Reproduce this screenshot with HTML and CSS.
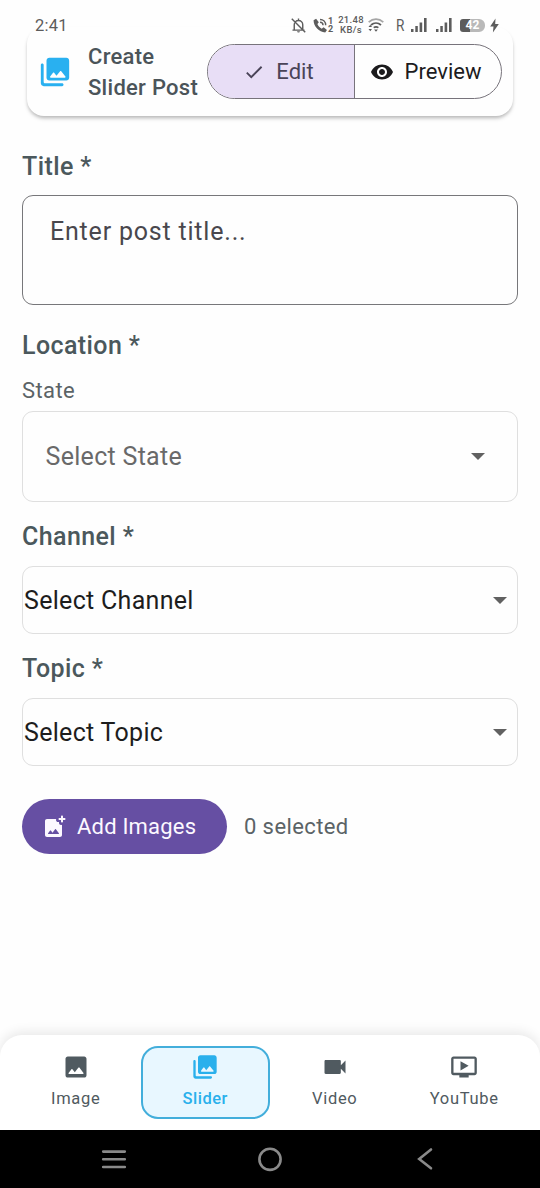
FILE: index.html
```html
<!DOCTYPE html>
<html lang="en">
<head>
<meta charset="utf-8">
<title>Create Slider Post</title>
<link rel="stylesheet" href="styles.css">
</head>
<body>
<svg class="defs" width="0" height="0">
  <symbol id="photos" viewBox="0 0 24 24"><path d="M22 16V4c0-1.1-.9-2-2-2H8c-1.1 0-2 .9-2 2v12c0 1.1.9 2 2 2h12c1.1 0 2-.9 2-2zm-10.6-3.47l1.63 2.18 2.58-3.22c.2-.25.58-.25.78 0l2.96 3.7c.26.33.03.81-.39.81H9c-.41 0-.65-.47-.4-.8l2-2.67c.2-.26.6-.26.8 0zM2 7v13c0 1.1.9 2 2 2h13c.55 0 1-.45 1-1s-.45-1-1-1H5c-.55 0-1-.45-1-1V7c0-.55-.45-1-1-1s-1 .45-1 1z"/></symbol>
  <symbol id="caret" viewBox="0 0 14 7"><path d="M0 0h14L7 7z"/></symbol>
</svg>
<div class="screen">
  <div class="status">
    <span class="time">2:41</span>
    <svg class="s-bell" viewBox="0 0 24 24"><path fill="none" stroke="currentColor" stroke-width="2" d="M6 18V11a6 6 0 0 1 12 0v7M3.500 18.500h17M12 2v3M2.500 2.500l19 19"/><path d="M10 20h4a2 2 0 0 1-4 0z"/></svg>
    <svg class="s-call" viewBox="0 0 16 16"><path d="M3.300 .8L.6 2.500C.6 9 6.500 15.200 13 15.400l1.900-2.700-3.600-2.900-2 1.600C7.300 10.400 5.500 8.500 4.700 6.500L6.200 4.600z"/><path fill="none" stroke="currentColor" stroke-width="1.500" d="M7.500 1.600c3.500 0 6 2.500 6 6M7.500 4.500c1.900 0 3.200 1.300 3.200 3.200"/></svg>
    <span class="sim"><span>1</span><span>2</span></span>
    <span class="speed"><span>21.48</span><span>KB/s</span></span>
    <svg class="s-wifi" viewBox="0 0 16 14"><g fill="none" stroke="currentColor" stroke-width="1.700"><path opacity=".55" d="M.7 4.200C5 .2 11 .2 15.300 4.200"/><path d="M3 7c3-2.700 7-2.700 10 0M5.700 9.700c1.500-1.200 3.200-1.200 4.700 0"/></g><path d="M8 13.800L6.100 11.500h3.800zM.5 9L2.300 6.800 4 9zM.5 11l1.800 2.200L4 11z"/></svg>
    <span class="roam">R</span>
    <svg class="s-sig" viewBox="0 0 16 14"><path d="M0 11h2.500v3H0zM4.300 8h2.500v6H4.300zM8.600 4.500h2.600V14H8.600zM13 0h2.600v14H13z"/></svg>
    <svg class="s-sig" viewBox="0 0 16 14"><path d="M0 11h2.500v3H0zM4.300 8h2.500v6H4.300zM8.600 4.500h2.600V14H8.600zM13 0h2.600v14H13z"/></svg>
    <span class="battery"><span class="cell">42</span></span>
    <svg class="s-bolt" viewBox="0 0 9 14"><path d="M5.500 0L.2 8h3.300L2.900 14 8.800 5.500H5.200z"/></svg>
  </div>

  <header class="card">
    <svg class="card-icon"><use href="#photos"/></svg>
    <h1 class="card-title">Create<br>Slider Post</h1>
    <div class="segmented">
      <div class="segment selected">
        <svg class="i-check" viewBox="0 0 24 24"><path d="M9 16.170L4.830 12l-1.420 1.410L9 19 21 7l-1.410-1.410z"/></svg>
        <span>Edit</span>
      </div>
      <div class="segment">
        <svg class="i-eye" viewBox="0 0 24 24"><path d="M12 4.500C7 4.500 2.730 7.610 1 12c1.730 4.390 6 7.500 11 7.500s9.270-3.110 11-7.500c-1.730-4.390-6-7.500-11-7.500zM12 17c-2.760 0-5-2.240-5-5s2.240-5 5-5 5 2.240 5 5-2.240 5-5 5zm0-8c-1.660 0-3 1.340-3 3s1.340 3 3 3 3-1.340 3-3-1.340-3-3-3z"/></svg>
        <span>Preview</span>
      </div>
    </div>
  </header>

  <main class="form">
    <h2 class="label">Title *</h2>
    <div class="textbox">Enter post title...</div>
    <h2 class="label label-location">Location *</h2>
    <div class="sublabel">State</div>
    <div class="select select-state"><span>Select State</span><svg class="caret"><use href="#caret"/></svg></div>
    <h2 class="label label-channel">Channel *</h2>
    <div class="select"><span>Select Channel</span><svg class="caret"><use href="#caret"/></svg></div>
    <h2 class="label label-topic">Topic *</h2>
    <div class="select"><span>Select Topic</span><svg class="caret"><use href="#caret"/></svg></div>
    <div class="images-row">
      <div class="add-button">
        <svg class="i-add" viewBox="0 0 24 24"><path d="M21.500 5H20v1.500c0 .55-.45 1-1 1s-1-.45-1-1V5h-1.500c-.55 0-1-.45-1-1s.45-1 1-1H18V1.500c0-.55.45-1 1-1s1 .45 1 1V3h1.500c.55 0 1 .45 1 1s-.45 1-1 1zM16 8V7h-1c-.55 0-1-.22-1.400-.6-.4-.36-.6-.86-.6-1.400 0-.36.1-.7.270-1H4c-1.100 0-2 .9-2 2v14c0 1.100.9 2 2 2h13c1.100 0 2-.9 2-2V9.700c-.3.200-.64.300-1 .300-1.100 0-2-.9-2-2zm-.500 11H5.500c-.42 0-.65-.48-.4-.8l2-2.600c.2-.26.600-.26.800 0L9.500 17.700l2.600-3.400c.2-.26.600-.26.800 0l3 3.900c.25.320.020.800-.4.800z"/></svg>
        <span>Add Images</span>
      </div>
      <span class="count">0 selected</span>
    </div>
  </main>

  <nav class="tabs">
    <div class="tab">
      <svg viewBox="0 0 24 24"><path d="M21 19V5c0-1.100-.9-2-2-2H5c-1.100 0-2 .9-2 2v14c0 1.100.9 2 2 2h14c1.100 0 2-.9 2-2zM8.900 13.980l2.100 2.530 3.100-3.990c.2-.26.600-.26.800.010l3.510 4.680c.25.330.010.800-.4.800H6.020c-.42 0-.65-.48-.39-.81L8.120 14c.19-.26.570-.27.780-.020z"/></svg>
      <span>Image</span>
    </div>
    <div class="tab active">
      <svg><use href="#photos"/></svg>
      <span>Slider</span>
    </div>
    <div class="tab">
      <svg viewBox="0 0 24 24"><path d="M17 10.500V7c0-.55-.45-1-1-1H4c-.55 0-1 .45-1 1v10c0 .55.45 1 1 1h12c.55 0 1-.45 1-1v-3.500l4 4v-11l-4 4z"/></svg>
      <span>Video</span>
    </div>
    <div class="tab">
      <svg viewBox="0 0 24 24"><path d="M21 3H3c-1.110 0-2 .89-2 2v12c0 1.100.89 2 2 2h5v2h8v-2h5c1.100 0 1.990-.9 1.990-2L23 5c0-1.110-.9-2-2-2zm0 14H3V5h18v12zm-5-6l-7 4V7z"/></svg>
      <span>YouTube</span>
    </div>
  </nav>

  <div class="system">
    <svg viewBox="0 0 28 28"><path d="M3.200 6.600h21.600M3.200 14.300h21.600M3.200 22h21.600"/></svg>
    <svg viewBox="0 0 28 28"><circle cx="14" cy="14.300" r="10.600"/></svg>
    <svg viewBox="0 0 28 28"><path d="M19 4.500L7.200 14l11.800 9.300"/></svg>
  </div>
</div>
</body>
</html>
```
FILE: styles.css
```css
* { box-sizing: border-box; }
body { margin: 0; background: #fefefe; font-family: Roboto, sans-serif; }
svg { fill: currentColor; flex: none; display: block; }
.defs { position: absolute; }
h1, h2 { margin: 0; font-weight: 500; }
.screen { width: 540px; height: 1188px; display: flex; flex-direction: column; overflow: hidden; }

.status { flex: none; height: 37px; margin-bottom: -10px; padding: 13px 0 0 35px; display: flex; align-items: center; position: relative; z-index: 1; color: #5c5c5c; white-space: nowrap; }
.time { font-size: 16.500px; letter-spacing: .2px; width: 255px; flex: none; }
.s-bell { width: 17px; height: 17px; }
.s-call { width: 15px; height: 15px; margin-left: 6px; }
.sim { display: flex; flex-direction: column; font-size: 9px; line-height: 8px; font-weight: 700; width: 6px; }
.speed { display: flex; flex-direction: column; align-items: center; width: 26px; margin-left: 4px; font-size: 9.500px; line-height: 10px; font-weight: 500; letter-spacing: .3px; }
.s-wifi { width: 16px; height: 14px; margin-left: 4px; }
.roam { font-size: 16px; width: 15px; margin-left: 12px; transform: scaleX(.85); transform-origin: left; }
.s-sig { width: 16px; height: 14px; }
.s-sig + .s-sig { margin-left: 9px; }
.battery { width: 25px; height: 13px; margin-left: 8px; display: flex; }
.cell { width: 25px; height: 13px; border-radius: 3px 6px 6px 3px; background: linear-gradient(90deg, #5c5c5c 42%, #b9b9b9 42%); color: #fff; font-size: 12px; line-height: 13px; font-weight: 700; text-align: center; }
.s-bolt { width: 9px; height: 15px; margin-left: 5px; }

.card { margin: 0 27px; height: 89px; flex: none; display: flex; align-items: center; padding-left: 11px; border-radius: 17px; background: #fefefe; box-shadow: 0 3px 4px -1px rgba(0,0,0,.25), 0 2px 3px rgba(0,0,0,.06); color: #4b5459; }
.card-icon { width: 34px; height: 34px; color: #29b0f0; }
.card-title { font-size: 22px; line-height: 31px; letter-spacing: .28px; width: 118.500px; margin-left: 16px; white-space: nowrap; }
.segmented { flex: none; display: flex; width: 295px; height: 55px; border: 1px solid #77737b; border-radius: 28px; overflow: hidden; font-size: 22px; color: #1c1b1d; }
.segment { flex: 1; display: flex; align-items: center; justify-content: center; gap: 11px; padding-right: 4px; }
.selected { background: #e8def6; color: #4a4458; border-right: 1px solid #77737b; }
.i-check { width: 22px; height: 22px; }
.i-eye { width: 24px; height: 24px; }

.form { flex: 1; padding: 36px 22px 0; }
.label { font-size: 25px; line-height: 30px; letter-spacing: .4px; color: #4b585c; }
.textbox { height: 110px; margin-top: 13px; border: 1px solid #77777a; border-radius: 11px; padding: 21px 27px; font-size: 25px; line-height: 30px; letter-spacing: .8px; color: #49474d; }
.label-location { margin-top: 26px; }
.sublabel { margin-top: 17px; font-size: 22px; line-height: 26px; letter-spacing: .4px; color: #5b6366; }
.select { height: 68px; margin-top: 14px; border: 1px solid #dfdfdf; border-radius: 11px; padding: 0 10px 0 1px; display: flex; align-items: center; justify-content: space-between; font-size: 25px; letter-spacing: .3px; color: #1d1d1d; }
.select-state { height: 91px; margin-top: 7px; padding: 0 32px 0 22.500px; color: #696969; }
.caret { width: 14px; height: 7px; color: #616161; }
.label-channel { margin-top: 20px; }
.label-topic { margin-top: 20px; }
.images-row { display: flex; align-items: center; margin-top: 33px; font-size: 22px; }
.add-button { width: 205px; height: 55px; border-radius: 28px; display: flex; align-items: center; gap: 10px; padding-left: 21px; background: #664fa3; color: #fcf8ff; letter-spacing: .2px; }
.i-add { width: 24px; height: 24px; }
.count { margin-left: 17px; letter-spacing: .4px; color: #5b6366; }

.tabs { height: 95px; flex: none; display: flex; padding: 11px; border-radius: 22px 22px 0 0; background: #fff; box-shadow: 0 -3px 12px rgba(0,0,0,.09); color: #505a60; }
.tab { width: 25%; height: 73px; display: flex; flex-direction: column; align-items: center; padding-top: 7px; border-radius: 17px; font-size: 16.500px; line-height: 20px; letter-spacing: .7px; }
.tab svg { width: 28px; height: 28px; margin-bottom: 8px; }
.active { padding-top: 5px; border: 2px solid #43aedb; background: #e8f7ff; color: #29b0ec; font-weight: 500; letter-spacing: .5px; }

.system { height: 58px; flex: none; background: #000; display: flex; align-items: center; justify-content: space-between; padding: 0 100px; }
.system svg { width: 28px; height: 28px; fill: none; stroke: #8a8a8a; stroke-width: 2.600; stroke-linecap: round; }
```
